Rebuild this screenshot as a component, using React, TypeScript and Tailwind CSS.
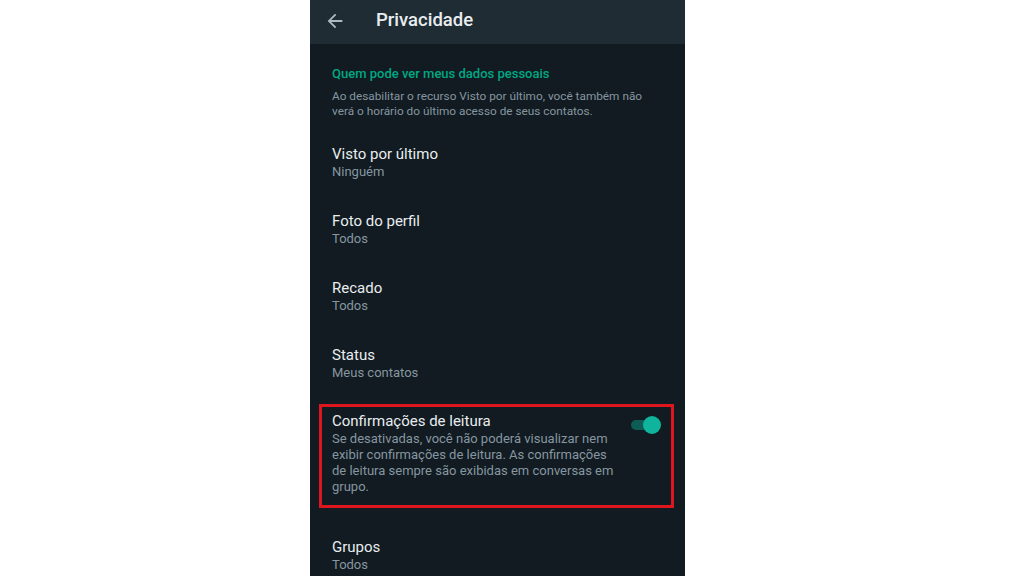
import React from "react";

type Row = { title: string; value: string };

const rows: Row[] = [
  { title: "Visto por último", value: "Ninguém" },
  { title: "Foto do perfil", value: "Todos" },
  { title: "Recado", value: "Todos" },
  { title: "Status", value: "Meus contatos" },
];

function BackArrow() {
  return (
    <svg width="22" height="22" viewBox="0 0 24 24" fill="#aebac1" aria-hidden>
      <path d="M20 11H7.83l5.59-5.59L12 4l-8 8 8 8 1.41-1.41L7.83 13H20v-2z" />
    </svg>
  );
}

function SettingRow({ title, value }: Row) {
  return (
    <div className="flex flex-col">
      <div className="text-[15px] leading-[20px] text-[#e9edef]">{title}</div>
      <div className="text-[13px] leading-[16px] text-[#8696a0]">{value}</div>
    </div>
  );
}

function Toggle() {
  return (
    <div className="relative w-[30px] h-[18px] shrink-0">
      <div className="absolute left-0 top-[4px] w-[26px] h-[10px] rounded-full bg-[#0d5d54]" />
      <div className="absolute right-0 top-0 w-[18px] h-[18px] rounded-full bg-[#10b39b]" />
    </div>
  );
}

export default function App() {
  return (
    <div
      className="w-full h-[576px] bg-white flex pl-[310px] overflow-hidden"
      style={{ fontFamily: "Roboto, 'Noto Sans', sans-serif" }}
    >
      <div className="w-[375px] h-[576px] bg-[#111b21] flex flex-col">
        <header className="h-[44px] shrink-0 bg-[#1f2c34] flex items-center pb-[3px] pl-[14px]">
          <BackArrow />
          <h1 className="ml-[30px] text-[18.5px] font-medium text-[#e9edef]">Privacidade</h1>
        </header>

        <div className="px-[22px] flex flex-col">
          <div className="mt-[22px] text-[13px] leading-[16px] font-medium text-[#00a884]">
            Quem pode ver meus dados pessoais
          </div>
          <p className="mt-[7px] text-[11.8px] leading-[15px] text-[#8696a0]">
            Ao desabilitar o recurso Visto por último, você também não verá o horário do último acesso de seus contatos.
          </p>

          <div className="mt-[25px] flex flex-col gap-[31px]">
            {rows.map((r) => (
              <SettingRow key={r.title} {...r} />
            ))}
          </div>

          <div className="mt-[23px] -ml-[13px] -mr-[11px] border-[3px] border-[#e0161e] pl-[10px] pr-[10px] pt-[4px] pb-[10px] flex items-start gap-[8px]">
            <div className="flex-1 flex flex-col">
              <div className="text-[15px] leading-[20px] text-[#e9edef]">Confirmações de leitura</div>
              <div className="text-[13px] leading-[16px] text-[#8696a0]">
                Se desativadas, você não poderá visualizar nem exibir confirmações de leitura. As confirmações de leitura sempre são exibidas em conversas em grupo.
              </div>
            </div>
            <div className="pt-[5px]">
              <Toggle />
            </div>
          </div>

          <div className="mt-[29px]">
            <SettingRow title="Grupos" value="Todos" />
          </div>
        </div>
      </div>
    </div>
  );
}
